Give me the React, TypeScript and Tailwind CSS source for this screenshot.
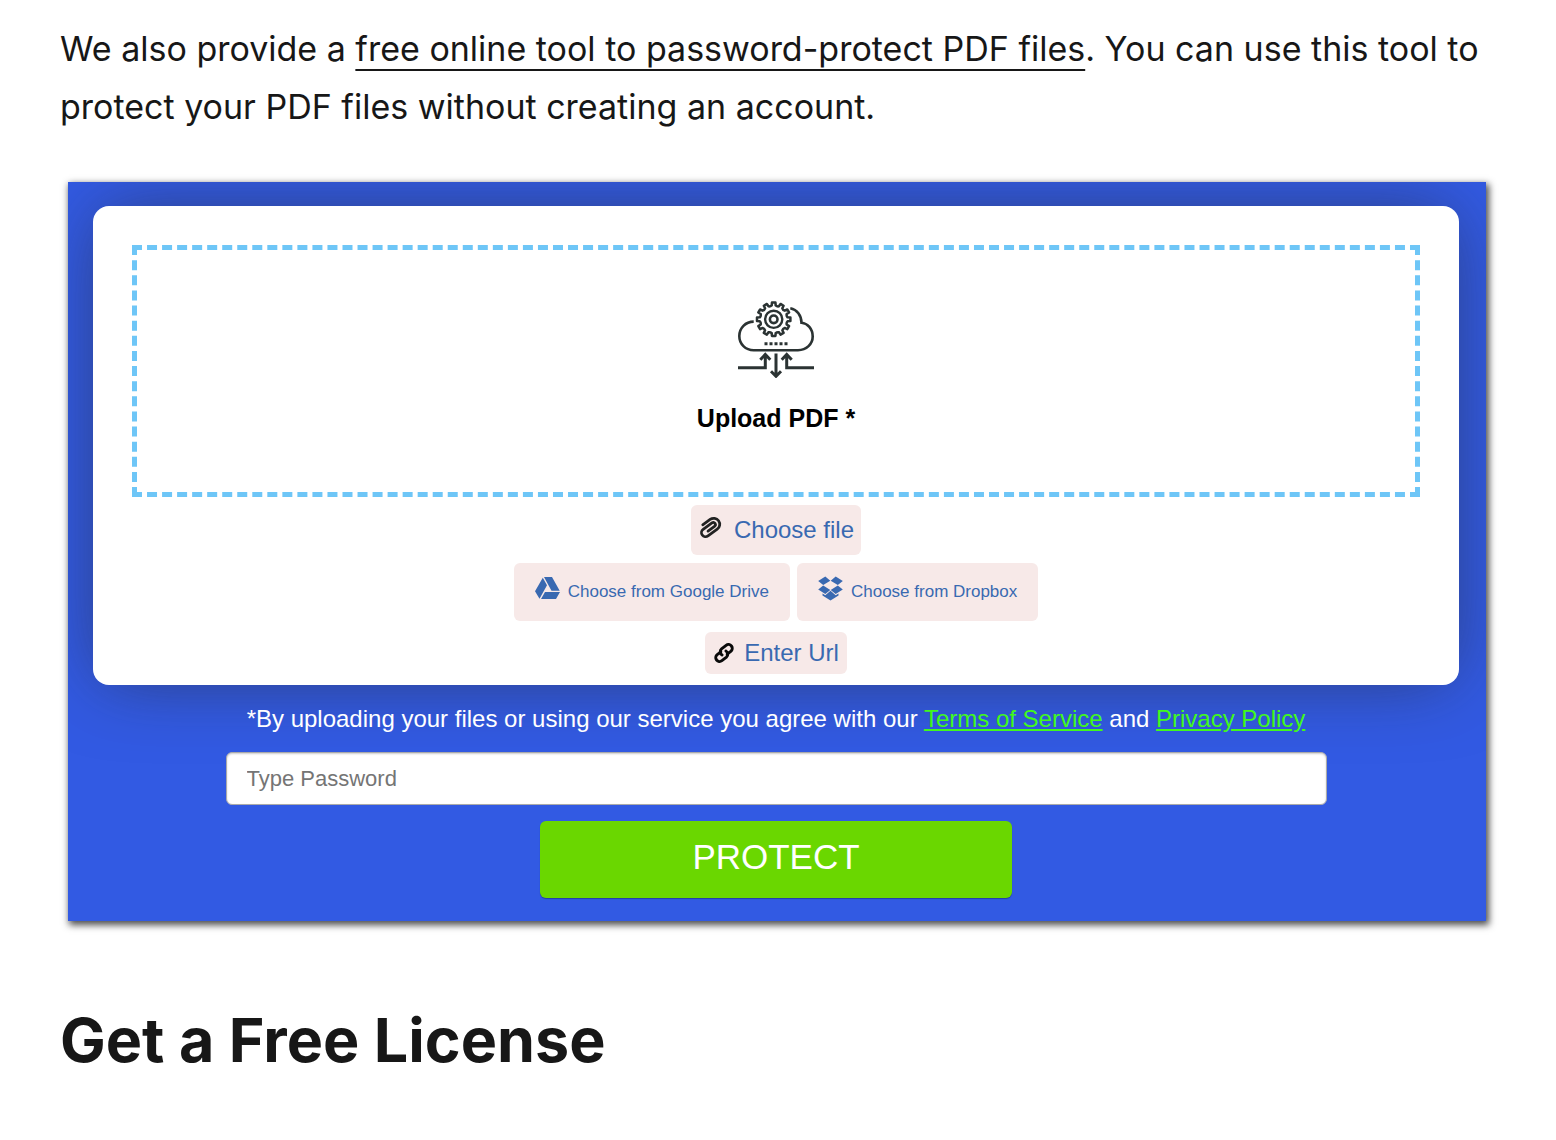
const GEAR_TEETH = 12;

function gearPath(cx: number, cy: number, inner: number, outer: number) {
  const step = (Math.PI * 2) / GEAR_TEETH;
  const point = (r: number, a: number) =>
    `${(cx + r * Math.sin(a)).toFixed(2)} ${(cy - r * Math.cos(a)).toFixed(2)}`;
  let d = "";
  for (let i = 0; i < GEAR_TEETH; i++) {
    const a = i * step;
    d += `${i === 0 ? "M" : "L"}${point(inner, a - step * 0.27)}`;
    d += `L${point(outer, a - step * 0.2)}L${point(outer, a + step * 0.2)}`;
    d += `L${point(inner, a + step * 0.27)}`;
    d += `Q${point(inner - 1, a + step * 0.5)} ${point(inner, a + step * 0.73)}`;
  }
  return d + "Z";
}

function CloudUploadIcon() {
  return (
    <svg viewBox="0 0 76 77" className="h-[77px] w-[76px]" fill="none" stroke="#2b3333" strokeWidth="2.6" aria-hidden="true">
      <path d={gearPath(35.7, 18.3, 14, 16.8)} strokeLinejoin="round" strokeWidth="2.5" />
      <circle cx="35.7" cy="18.3" r="8.6" strokeWidth="2.4" />
      <circle cx="35.7" cy="18.3" r="3.8" strokeWidth="2.6" />
      <path d="M15.7 20.6C7.5 20.6 1.3 27 1.3 35S7.5 49.2 15.7 49.2H60C68.5 49.2 74.7 43 74.7 35.5C74.7 27.8 69.5 22.2 63.5 21.7C63.3 14.5 59.2 8.6 52.3 7.3" />
      <path d="M26.5 42.7h23" strokeWidth="3" strokeDasharray="3 2" />
      <path d="M0 66.7H27.3V54M22.3 58.7L27.3 53.5L32.3 58.7M76 66.7H48.7V54M43.7 58.7L48.7 53.5L53.7 58.7" strokeWidth="3" />
      <path d="M38 52.5V75M33 70.3L38 75.3L43 70.3" strokeWidth="3" />
    </svg>
  );
}

function PaperclipIcon() {
  return (
    <svg viewBox="-10.5 -10.5 21 21" className="mb-1 size-6" fill="none" stroke="#222" strokeWidth="2.4" strokeLinecap="round" aria-hidden="true">
      <path transform="rotate(-36)" d="M-3 1.2H4A1.9 1.9 0 0 0 4 -2.6H-5.5A3.6 3.6 0 0 0 -5.5 4.6H4.5A5.3 5.3 0 0 0 4.5 -6H-3.5" />
    </svg>
  );
}

function LinkIcon() {
  const half = "M-1.5 -2.5H-5.5A3.3 3.3 0 0 0 -5.5 4.1H-.5A3.3 3.3 0 0 0 2.4 -.4";
  return (
    <svg viewBox="-9.5 -9.5 19 19" className="size-[22px]" fill="none" stroke="#0a0a0a" strokeWidth="2.5" strokeLinecap="round" aria-hidden="true">
      <g transform="rotate(-38)">
        <path d={half} />
        <path d={half} transform="rotate(180)" />
      </g>
    </svg>
  );
}

function GoogleDriveIcon() {
  return (
    <svg viewBox="0 0 25 22" className="mb-2 h-[22px] w-[25px]" fill="currentColor" aria-hidden="true">
      <path d="M7.8 .8L12 8.3L4.5 21.8L0 14.3ZM9 0H17L24.7 13.8H16.5ZM10 15H25L21 22H6Z" />
    </svg>
  );
}

function DropboxIcon() {
  return (
    <svg viewBox="0 0 25 25" className="mb-2 size-[25px]" fill="currentColor" aria-hidden="true">
      <path d="M7.3 .5L12.3 4.7L5.2 9.1L.2 5ZM17.7 .5L12.7 4.7L19.8 9.1L24.8 5ZM5.2 9.5L12.3 13.9L7.3 18L.2 13.5ZM19.8 9.5L12.7 13.9L17.7 18L24.8 13.5ZM12.5 14.8L17.7 19.2L20.5 17.5V19.6L12.5 24.4L4.5 19.6V17.5L7.3 19.2Z" />
    </svg>
  );
}

export default function App() {
  return (
    <main className="min-h-screen bg-white px-[60px] pt-5 font-['Inter',sans-serif] text-[#171717]">
      <p className="text-[34px] leading-[58px]">
        We also provide a{" "}
        <a href="#protect" className="underline decoration-2 underline-offset-8 [text-decoration-skip-ink:none]">
          free online tool to password-protect PDF files
        </a>
        . You can use this tool to protect your PDF files without creating an account.
      </p>

      <div className="ml-2 mr-[10px] mt-[46px] shadow-[2px_3px_7px_1px_rgba(0,0,0,0.7)]">
        <form
          id="protect"
          onSubmit={(e) => e.preventDefault()}
          className="flex flex-col items-center overflow-hidden bg-[#325ae3] pb-[23px] pl-[25px] pr-[27px] pt-6 font-['Liberation_Sans',Arial,sans-serif]"
        >
          <div className="flex w-full flex-col items-center rounded-2xl bg-white px-[39px] pb-[11px] pt-[39px] shadow-[0_0_72px_-8px_rgba(40,40,40,0.6)]">
            <div className="flex h-[252px] w-full flex-col items-center border-[5px] border-dashed border-[#6ec6f7] pt-[51px] text-black">
              <CloudUploadIcon />
              <p className="mt-6 text-[25px] font-bold leading-8">Upload PDF *</p>
            </div>
            <button type="button" className="mt-2 flex h-[50px] items-center gap-3 rounded-md bg-[#f7e9e8] px-[7px] text-2xl text-[#3969b1]">
              <PaperclipIcon />
              Choose file
            </button>
            <div className="mt-2 flex gap-[7px]">
              <button type="button" className="flex h-[58px] items-center gap-2 rounded-md bg-[#f7e9e8] px-[21px] text-[17px] text-[#3969b1]">
                <GoogleDriveIcon />
                Choose from Google Drive
              </button>
              <button type="button" className="flex h-[58px] items-center gap-2 rounded-md bg-[#f7e9e8] px-[21px] text-[17px] text-[#3969b1]">
                <DropboxIcon />
                Choose from Dropbox
              </button>
            </div>
            <button type="button" className="mt-[11px] flex h-[42px] items-center gap-[9px] rounded-md bg-[#f7e9e8] px-2 text-2xl text-[#3969b1]">
              <LinkIcon />
              Enter Url
            </button>
          </div>

          <p className="relative mt-[18px] text-2xl leading-8 text-white">
            *By uploading your files or using our service you agree with our{" "}
            <a href="#terms" className="text-[#41f81c] underline">Terms of Service</a> and{" "}
            <a href="#privacy" className="text-[#41f81c] underline">Privacy Policy</a>
          </p>
          <input
            type="password"
            aria-label="Type Password"
            placeholder="Type Password"
            className="relative mt-[17px] h-[53px] w-[1101px] max-w-full rounded-md border border-[#aaa] bg-white px-5 text-[22px] text-[#333] shadow-[inset_0_1px_2px_rgba(0,0,0,0.2)] outline-none placeholder:text-[#757575]"
          />
          <button type="submit" className="mt-4 h-[77px] w-[472px] rounded-md bg-[#6ad700] pb-1 text-[35px] text-white shadow-[0_1px_1px_rgba(0,0,0,0.3)]">
            PROTECT
          </button>
        </form>
      </div>

      <h2 className="mt-[79px] text-[61px] font-bold leading-[80px]">Get a Free License</h2>
    </main>
  );
}
